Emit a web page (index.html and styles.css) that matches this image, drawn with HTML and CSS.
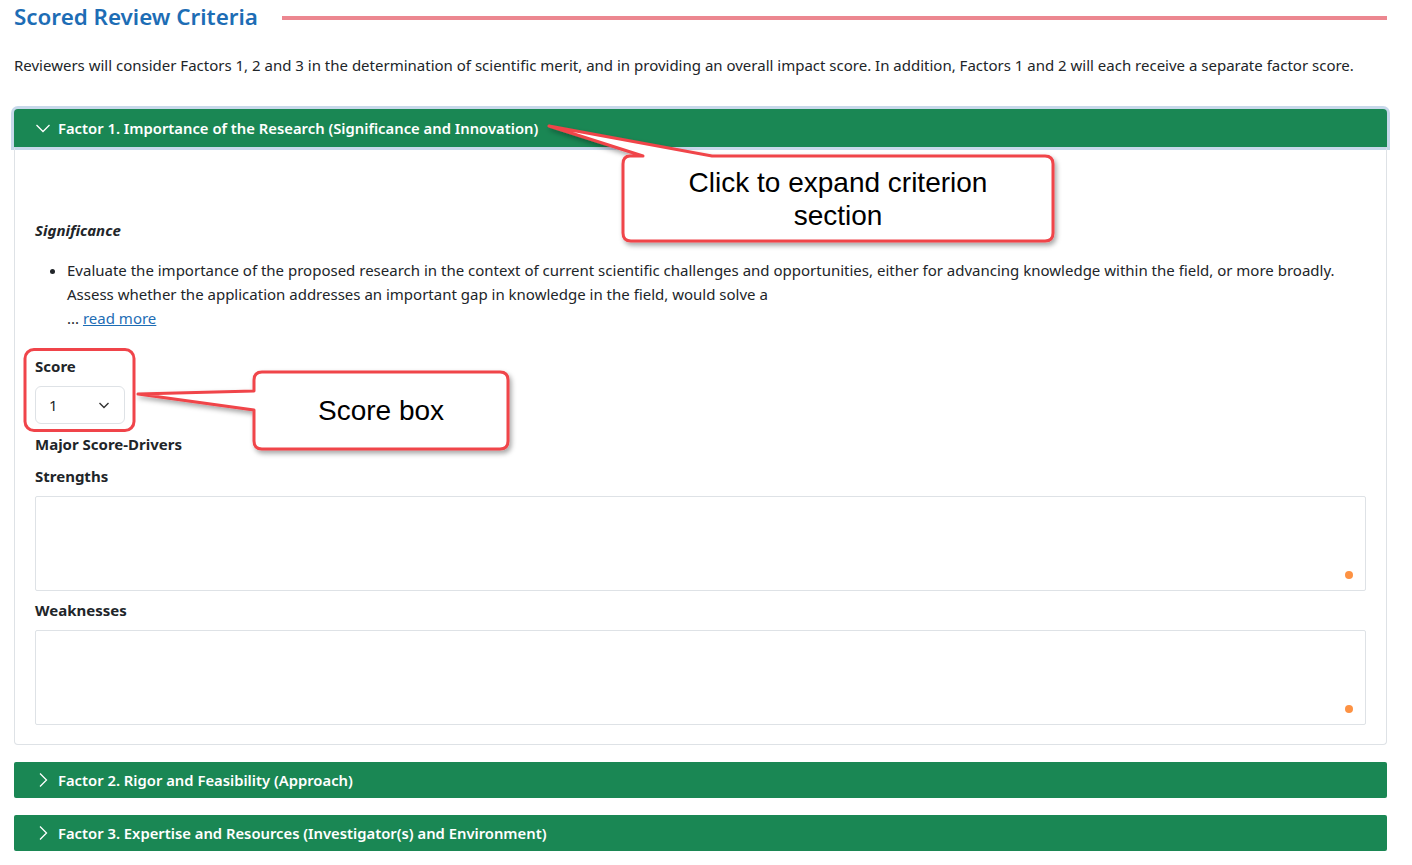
FILE: index.html
```html
<!DOCTYPE html>
<html lang="en">
<head>
    <meta charset="UTF-8">
    <title>Scored Review Criteria</title>
    <link rel="stylesheet" href="styles.css">
</head>
<body>
    <div class="page">
        <div class="title_row">
            <h2>Scored Review Criteria</h2>
            <span class="title_line"></span>
        </div>
        <p class="intro">Reviewers will consider Factors 1, 2 and 3 in the determination of scientific merit, and in providing an overall impact score. In addition, Factors 1 and 2 will each receive a separate factor score.</p>

        <div class="accordion">
            <div class="acc_item open">
                <div class="acc_head focus">
                    <svg class="chev" width="16" height="16" viewBox="0 0 16 16"><path d="M1.5 5 L8 11.5 L14.5 5" fill="none" stroke="#fff" stroke-width="1.3"/></svg>
                    <span>Factor 1. Importance of the Research (Significance and Innovation)</span>
                </div>
                <div class="acc_body">
                    <h4 class="sub">Significance</h4>
                    <ul class="crit">
                        <li>Evaluate the importance of the proposed research in the context of current scientific challenges and opportunities, either for advancing knowledge within the field, or more broadly. Assess whether the application addresses an important gap in knowledge in the field, would solve a<br>... <a href="#">read more</a></li>
                    </ul>
                    <label class="lbl">Score</label>
                    <div class="select">
                        <span>1</span>
                        <svg width="12" height="12" viewBox="0 0 12 12"><path d="M1.5 4 L6 8.5 L10.5 4" fill="none" stroke="#333" stroke-width="1.4"/></svg>
                    </div>
                    <div class="lbl drivers">Major Score-Drivers</div>
                    <label class="lbl">Strengths</label>
                    <div class="area"><span class="dot"></span></div>
                    <label class="lbl">Weaknesses</label>
                    <div class="area"><span class="dot"></span></div>
                </div>
            </div>
            <div class="acc_item">
                <div class="acc_head">
                    <svg class="chev" width="16" height="16" viewBox="0 0 16 16"><path d="M5 1.5 L11.5 8 L5 14.5" fill="none" stroke="#fff" stroke-width="1.3"/></svg>
                    <span>Factor 2. Rigor and Feasibility (Approach)</span>
                </div>
            </div>
            <div class="acc_item">
                <div class="acc_head">
                    <svg class="chev" width="16" height="16" viewBox="0 0 16 16"><path d="M5 1.5 L11.5 8 L5 14.5" fill="none" stroke="#fff" stroke-width="1.3"/></svg>
                    <span>Factor 3. Expertise and Resources (Investigator(s) and Environment)</span>
                </div>
            </div>
        </div>

        <!-- annotations drawn over the screenshot -->
        <svg class="callout_svg" width="1412" height="865" viewBox="0 0 1412 865">
            <defs>
                <filter id="shadow" x="-10%" y="-10%" width="130%" height="140%">
                    <feDropShadow dx="2" dy="3" stdDeviation="2.5" flood-color="#000" flood-opacity="0.35"/>
                </filter>
            </defs>
            <path filter="url(#shadow)" fill="#fff" stroke="#f0444a" stroke-width="3" stroke-linejoin="round"
                d="M630 156 L643 156 L549 126 L712 156 L1045 156 Q1053 156 1053 164 L1053 233 Q1053 241 1045 241 L631 241 Q623 241 623 233 L623 164 Q623 156 630 156 Z"/>
            <path filter="url(#shadow)" fill="#fff" stroke="#f0444a" stroke-width="3" stroke-linejoin="round"
                d="M262 372 L500 372 Q508 372 508 380 L508 441 Q508 449 500 449 L262 449 Q254 449 254 441 L254 410 L138 394 L254 391 L254 380 Q254 372 262 372 Z"/>
            <rect x="25" y="349.5" width="109" height="81" rx="9" fill="none" stroke="#f0444a" stroke-width="3"/>
        </svg>
        <div class="callout_text c1">Click to expand criterion<br>section</div>
        <div class="callout_text c2">Score box</div>
    </div>
</body>
</html>
```

FILE: styles.css
```css
body {
    margin: 0;
    font-family: "Segoe UI", "Noto Sans", "Open Sans", sans-serif;
    color: #212529;
    background: #fff;
}
.page {
    position: relative;
    width: 1373px;
    padding: 0 0 0 14px;
}
.title_row {
    display: flex;
    align-items: center;
    gap: 24px;
    height: 33px;
}
.title_row h2 {
    margin: 0;
    font-size: 22.4px;
    font-weight: 600;
    color: #1d6db5;
    white-space: nowrap;
}
.title_line {
    flex: 1;
    height: 4px;
    background: #ec8790;
    margin-top: 2px;
}
.intro {
    margin: 21px 0 0;
    font-size: 15px;
    line-height: 22px;
}
.accordion {
    margin-top: 33px;
}
.acc_item {
    margin-bottom: 17px;
}
.acc_head {
    display: flex;
    align-items: center;
    height: 36px;
    padding-left: 21px;
    gap: 7px;
    background: #1a8754;
    color: #fff;
    font-size: 14.8px;
    font-weight: 600;
    border-radius: 2px;
}
.acc_head.focus {
    height: 38px;
    box-shadow: 0 0 0 3px #c7d8ea;
    border-radius: 4px 4px 0 0;
}
.acc_body {
    border: 1px solid #dee2e6;
    border-top: 2px solid #c7d8ea;
    border-radius: 0 0 4px 4px;
    padding: 69px 20px 19px;
}
.sub {
    margin: 0;
    font-size: 15px;
    font-weight: 700;
    font-style: italic;
    line-height: 24px;
}
.crit {
    margin: 16px 0 0;
    padding-left: 32px;
    font-size: 15px;
    line-height: 24px;
}
.crit a {
    color: #1d6db5;
}
.lbl {
    display: block;
    font-size: 15px;
    font-weight: 700;
    line-height: 20px;
}
.crit + .lbl {
    margin-top: 26px;
}
.select {
    display: flex;
    align-items: center;
    justify-content: space-between;
    width: 90px;
    height: 38px;
    box-sizing: border-box;
    margin-top: 10px;
    padding: 0 14px 0 13px;
    border: 1px solid #dee2e6;
    border-radius: 6px;
    font-size: 15px;
}
.drivers {
    margin-top: 10px;
}
.drivers + .lbl {
    margin-top: 12px;
}
.area {
    position: relative;
    height: 95px;
    box-sizing: border-box;
    margin: 10px 0 9px;
    border: 1px solid #dee2e6;
    border-radius: 2px;
}
.area:last-child {
    margin-bottom: 0;
}
.dot {
    position: absolute;
    right: 12px;
    bottom: 11px;
    width: 8px;
    height: 8px;
    border-radius: 50%;
    background: #fd9243;
}
.callout_svg {
    position: absolute;
    left: 0;
    top: 0;
    pointer-events: none;
}
.callout_text {
    position: absolute;
    font-family: "Liberation Sans", Arial, sans-serif;
    font-size: 28px;
    line-height: 33px;
    color: #000;
    text-align: center;
}
.c1 {
    left: 623px;
    top: 166px;
    width: 430px;
}
.c2 {
    left: 254px;
    top: 394px;
    width: 254px;
}
```
